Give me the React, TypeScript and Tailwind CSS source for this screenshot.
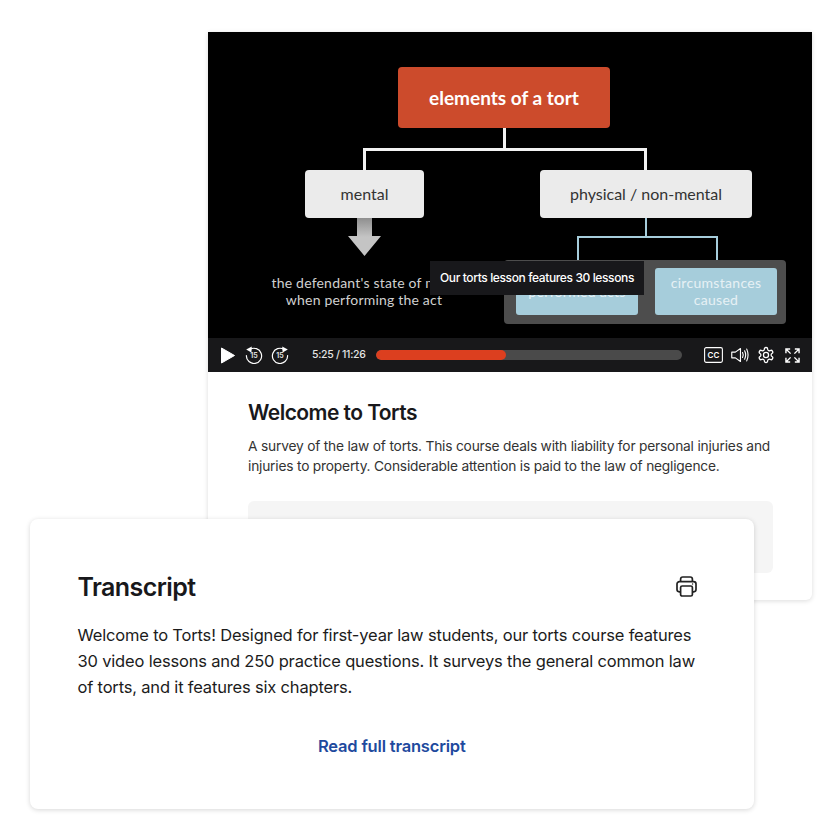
import React from "react";

function Play() {
  return (
    <svg width="14" height="17" viewBox="0 0 14 17" className="shrink-0">
      <path d="M0.5 1 L13.5 8.5 L0.5 16 Z" fill="#fff" stroke="#fff" strokeLinejoin="round" />
    </svg>
  );
}

function Skip({ flip }: { flip?: boolean }) {
  return (
    <svg width="18" height="18" viewBox="0 0 18 18" fill="none" className="shrink-0">
      <g transform={flip ? "translate(18 0) scale(-1 1)" : undefined}>
        <path d="M5 3.4 A7.6 7.6 0 1 1 1.4 9.6" stroke="#fff" strokeWidth="1.2" strokeLinecap="round" />
        <path d="M1.2 3.6 L6.8 0.6 L6.4 6.4 Z" fill="#fff" />
      </g>
      <text x="9" y="12.2" textAnchor="middle" fontSize="7" fontWeight="700" fill="#d8d8d8" fontFamily="Inter, sans-serif">15</text>
    </svg>
  );
}

function CC() {
  return (
    <svg width="19" height="16" viewBox="0 0 19 16" fill="none" className="shrink-0">
      <rect x="0.6" y="0.6" width="17.8" height="14.8" rx="1.6" stroke="#fff" strokeWidth="1.1" />
      <text x="9.5" y="10.8" textAnchor="middle" fontSize="8" fontWeight="600" fill="#fff" fontFamily="Inter, sans-serif">CC</text>
    </svg>
  );
}

function Volume() {
  return (
    <svg width="18" height="16" viewBox="0 0 19 16" fill="none" stroke="#fff" strokeWidth="1.2" className="shrink-0">
      <path d="M0.8 5 H4.6 L10 1.2 V14.8 L4.6 11 H0.8 Z" strokeLinejoin="round" />
      <path d="M12.2 5.4 Q13.6 8 12.2 10.6" strokeLinecap="round" />
      <path d="M14.4 3.6 Q16.6 8 14.4 12.4" strokeLinecap="round" />
      <path d="M16.6 1.8 Q19.4 8 16.6 14.2" strokeLinecap="round" />
    </svg>
  );
}

function Gear() {
  return (
    <svg width="18" height="18" viewBox="0 0 24 24" fill="none" stroke="#fff" strokeWidth="1.7" strokeLinecap="round" strokeLinejoin="round" className="shrink-0">
      <path d="M12.22 2h-.44a2 2 0 0 0-2 2v.18a2 2 0 0 1-1 1.73l-.43.25a2 2 0 0 1-2 0l-.15-.08a2 2 0 0 0-2.73.73l-.22.38a2 2 0 0 0 .73 2.73l.15.1a2 2 0 0 1 1 1.72v.51a2 2 0 0 1-1 1.74l-.15.09a2 2 0 0 0-.73 2.73l.22.38a2 2 0 0 0 2.73.73l.15-.08a2 2 0 0 1 2 0l.43.25a2 2 0 0 1 1 1.73V20a2 2 0 0 0 2 2h.44a2 2 0 0 0 2-2v-.18a2 2 0 0 1 1-1.73l.43-.25a2 2 0 0 1 2 0l.15.08a2 2 0 0 0 2.73-.73l.22-.39a2 2 0 0 0-.73-2.73l-.15-.08a2 2 0 0 1-1-1.74v-.5a2 2 0 0 1 1-1.74l.15-.09a2 2 0 0 0 .73-2.73l-.22-.38a2 2 0 0 0-2.73-.73l-.15.08a2 2 0 0 1-2 0l-.43-.25a2 2 0 0 1-1-1.73V4a2 2 0 0 0-2-2z" />
      <circle cx="12" cy="12" r="3.4" />
    </svg>
  );
}

function Fullscreen() {
  return (
    <svg width="15" height="15" viewBox="0 0 16 16" fill="none" stroke="#fff" strokeWidth="1.5" className="shrink-0">
      <path d="M1 5.5 V1 H5.5 M1 1 L6 6" />
      <path d="M15 5.5 V1 H10.5 M15 1 L10 6" />
      <path d="M1 10.5 V15 H5.5 M1 15 L6 10" />
      <path d="M15 10.5 V15 H10.5 M15 15 L10 10" />
    </svg>
  );
}

function Printer() {
  return (
    <svg width="21" height="21" viewBox="0 0 21 21" fill="none" stroke="#222" strokeWidth="1.7" strokeLinejoin="round">
      <path d="M4.6 5.6 V3.2 A2.2 2.2 0 0 1 6.8 1 H14.2 A2.2 2.2 0 0 1 16.4 3.2 V5.6" />
      <path d="M4.6 15.8 H3.2 A2.2 2.2 0 0 1 1 13.6 V8 A2.4 2.4 0 0 1 3.4 5.6 H17.6 A2.4 2.4 0 0 1 20 8 V13.6 A2.2 2.2 0 0 1 17.8 15.8 H16.4" />
      <rect x="4.6" y="10" width="11.8" height="10" rx="1.6" />
      <circle cx="16.6" cy="8" r="0.7" fill="#222" stroke="none" />
    </svg>
  );
}

function Slide() {
  return (
    <div className="relative w-full h-[306px] bg-black overflow-hidden font-['Lato',sans-serif]">
      {/* connectors */}
      <div className="absolute left-[295px] top-[96px] w-[3px] h-[22px] bg-[#f2f2f2]" />
      <div className="absolute left-[155px] top-[116px] w-[284px] h-[22px] border-t-[3px] border-l-[3px] border-r-[3px] border-[#f2f2f2]" />
      <div className="absolute left-[437px] top-[186px] w-[2px] h-[20px] bg-[#a6cddb]" />
      <div className="absolute left-[369px] top-[204px] w-[141px] h-[32px] border-t-2 border-l-2 border-r-2 border-[#a6cddb]" />

      <div className="absolute left-[190px] top-[35px] w-[212px] h-[61px] rounded-[4px] bg-[#cc4b2c] flex items-center justify-center pt-[2px] text-white text-[19px] font-bold">
        elements of a tort
      </div>
      <div className="absolute left-[97px] top-[138px] w-[119px] h-[48px] rounded-[4px] bg-[#ebebeb] flex items-center justify-center text-[#333] text-[16px]">
        mental
      </div>
      <div className="absolute left-[332px] top-[138px] w-[212px] h-[48px] rounded-[4px] bg-[#ebebeb] flex items-center justify-center text-[#333] text-[16px]">
        physical / non-mental
      </div>

      <svg className="absolute left-[140px] top-[186px]" width="33" height="38" viewBox="0 0 33 38">
        <defs>
          <linearGradient id="arrow" x1="0" y1="0" x2="0" y2="1">
            <stop offset="0" stopColor="#8f8f8f" />
            <stop offset="0.5" stopColor="#c4c4c4" />
          </linearGradient>
        </defs>
        <path d="M9 0 H24 V18 H33 L16.5 38 L0 18 H9 Z" fill="url(#arrow)" />
      </svg>

      <div className="absolute left-[46px] top-[243px] w-[220px] text-center text-[#d0d0d0] text-[14px] leading-[16.5px] tracking-[0.2px]">
        <div>the defendant's state of mind</div>
        <div>when performing the act</div>
      </div>

      <div className="absolute left-[296px] top-[228px] w-[282px] h-[64px] rounded-[4px] bg-[#4d4d4d] flex items-start gap-[17px] pl-[12px] pt-[8px]">
        <div className="w-[122px] h-[47px] rounded-[3px] bg-[#a6cddb] flex items-center justify-center text-center text-[#e6f1f5] text-[14px] leading-[17px] tracking-[0.3px]">
          performed acts
        </div>
        <div className="w-[122px] h-[47px] rounded-[3px] bg-[#a6cddb] flex items-center justify-center pb-[2px] text-center text-[#e6f1f5] text-[14px] leading-[17px] tracking-[0.3px]">
          circumstances
          <br />
          caused
        </div>
      </div>

      <div className="absolute left-[222px] top-[229px] w-[214px] h-[34px] bg-[#18181b] flex items-center pl-[10px] text-white text-[12px] tracking-[-0.38px] font-medium font-['Inter',sans-serif] whitespace-nowrap">
        Our torts lesson features 30 lessons
      </div>
    </div>
  );
}

function Controls() {
  return (
    <div className="h-[34px] bg-[#18181a] flex items-center pl-[13px] pr-[12px] font-['Inter',sans-serif]">
      <Play />
      <div className="ml-[10px] flex items-center gap-[8px]">
        <Skip />
        <Skip flip />
      </div>
      <div className="ml-[23px] w-[54px] text-[10.5px] tracking-[-0.3px] font-medium text-[#e5e5e5] whitespace-nowrap">5:25 / 11:26</div>
      <div className="ml-[10px] w-[306px] shrink-0 h-[10px] rounded-full bg-[#4a4a4a] overflow-hidden">
        <div className="w-[130px] h-full rounded-full bg-[#dc3f1f]" />
      </div>
      <div className="ml-[22px] flex items-center">
        <CC />
        <div className="ml-[8px]">
          <Volume />
        </div>
        <div className="ml-[8px]">
          <Gear />
        </div>
        <div className="ml-[10px]">
          <Fullscreen />
        </div>
      </div>
    </div>
  );
}

export default function App() {
  return (
    <div className="relative w-[840px] h-[840px] bg-white overflow-hidden font-['Inter',sans-serif]">
      <div className="absolute left-[208px] top-[32px] w-[604px] h-[568px] bg-white rounded-b-[6px] shadow-[0_1px_5px_rgba(0,0,0,0.14)]">
        <Slide />
        <Controls />
        <div className="px-[40px] pt-[27px]">
          <h1 className="text-[21px] leading-[28px] font-semibold tracking-[-0.55px] text-[#18181b]">Welcome to Torts</h1>
          <p className="mt-[9px] text-[13.75px] tracking-[-0.2px] leading-[20px] text-[#333]">
            A survey of the law of torts. This course deals with liability for personal injuries and injuries to property. Considerable attention is paid to the law of negligence.
          </p>
          <div className="mt-[25px] w-[525px] h-[72px] rounded-[6px] bg-[#f5f5f5]" />
        </div>
      </div>

      <div className="absolute left-[30px] top-[519px] w-[724px] h-[290px] bg-white rounded-[8px] shadow-[0_1px_5px_rgba(0,0,0,0.16)] pl-[47.5px] pr-[48px] pt-[50px]">
        <div className="flex items-center justify-between pr-[9px] h-[36px]">
          <h2 className="mt-[2px] text-[25px] font-semibold tracking-[-0.6px] text-[#18181b]">Transcript</h2>
          <div className="mb-[2px]">
            <Printer />
          </div>
        </div>
        <p className="mt-[17px] text-[16.5px] tracking-[-0.18px] leading-[26px] text-[#1c1c1c]">
          Welcome to Torts! Designed for first-year law students, our torts course features 30 video lessons and 250 practice questions. It surveys the general common law of torts, and it features six chapters.
        </p>
        <div className="mt-[33px] text-center text-[16.5px] tracking-[-0.18px] leading-[26px] font-semibold text-[#1e4a9e]">Read full transcript</div>
      </div>
    </div>
  );
}
